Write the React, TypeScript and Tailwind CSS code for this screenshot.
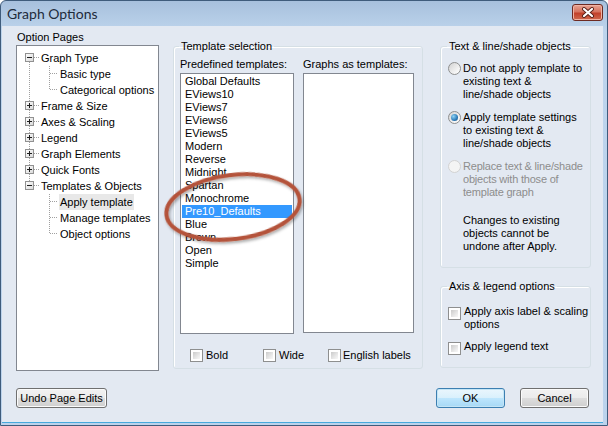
import React from 'react';

const TREE = [
  { label: 'Graph Type', level: 0, exp: 'minus', first: true },
  { label: 'Basic type', level: 1, parentOpen: true },
  { label: 'Categorical options', level: 1, parentOpen: true, lastChild: true },
  { label: 'Frame & Size', level: 0, exp: 'plus' },
  { label: 'Axes & Scaling', level: 0, exp: 'plus' },
  { label: 'Legend', level: 0, exp: 'plus' },
  { label: 'Graph Elements', level: 0, exp: 'plus' },
  { label: 'Quick Fonts', level: 0, exp: 'plus' },
  { label: 'Templates & Objects', level: 0, exp: 'minus', last: true },
  { label: 'Apply template', level: 1, selected: true },
  { label: 'Manage templates', level: 1 },
  { label: 'Object options', level: 1, lastChild: true },
];

const TEMPLATES = [
  'Global Defaults', 'EViews10', 'EViews7', 'EViews6', 'EViews5', 'Modern', 'Reverse',
  'Midnight', 'Spartan', 'Monochrome', 'Pre10_Defaults', 'Blue', 'Brown', 'Open', 'Simple',
];

const dot = { stroke: '#a0a0a0', strokeWidth: 1, strokeDasharray: '1 1', shapeRendering: 'crispEdges' as const };

function Gutter({ row }: { row: (typeof TREE)[number] }) {
  if (row.level === 0) {
    return (
      <svg width="18" height="16" className="shrink-0">
        {!row.first && <line x1="7.5" y1="0" x2="7.5" y2="3" {...dot} />}
        {!row.last && <line x1="7.5" y1="12" x2="7.5" y2="16" {...dot} />}
        <line x1="12" y1="7.5" x2="17" y2="7.5" {...dot} />
        <defs>
          <linearGradient id="bx" x1="0" y1="0" x2="1" y2="1">
            <stop offset="0" stopColor="#ffffff" />
            <stop offset="1" stopColor="#d8d8d8" />
          </linearGradient>
        </defs>
        <rect x="3.5" y="3.5" width="8" height="8" fill="url(#bx)" stroke="#919191" shapeRendering="crispEdges" />
        <line x1="5" y1="7.5" x2="10" y2="7.5" stroke="#1e1e1e" shapeRendering="crispEdges" />
        {row.exp === 'plus' && <line x1="7.5" y1="5" x2="7.5" y2="10" stroke="#1e1e1e" shapeRendering="crispEdges" />}
      </svg>
    );
  }
  return (
    <svg width="37" height="16" className="shrink-0">
      {row.parentOpen && <line x1="7.5" y1="0" x2="7.5" y2="16" {...dot} />}
      <line x1="27.5" y1="0" x2="27.5" y2={row.lastChild ? 8 : 16} {...dot} />
      <line x1="28" y1="7.5" x2="35" y2="7.5" {...dot} />
    </svg>
  );
}

function Radio({ on, disabled }: { on?: boolean; disabled?: boolean }) {
  return (
    <span
      className={`h-[13px] w-[13px] shrink-0 rounded-full border flex items-center justify-center ${
        disabled
          ? 'border-[#d2d2d2] bg-[#f4f4f4]'
          : 'border-[#8e8f8f] bg-[linear-gradient(135deg,#d2d2d2,#f4f4f4_70%,#ffffff)]'
      }`}
    >
      {on && <span className="h-[7px] w-[7px] rounded-full bg-[radial-gradient(circle_at_35%_35%,#8fd3f5,#2c7bb8_60%,#1b4f80)]" />}
    </span>
  );
}

function Check() {
  return (
    <span className="h-[13px] w-[13px] shrink-0 border border-[#8e8f8f] bg-white p-[2px] flex">
      <span className="flex-1 bg-[linear-gradient(135deg,#cbcbcb,#ececec_70%,#f8f8f8)]" />
    </span>
  );
}

const btn =
  'h-[20px] rounded-[3px] border border-[#707070] bg-[linear-gradient(#f2f2f2_0%,#ebebeb_50%,#dddddd_51%,#cfcfcf_100%)] shadow-[inset_0_0_0_1px_#fbfbfb] text-[11px] text-black flex items-center justify-center';

const group = 'border border-[#d5dfe5] rounded-[3px] shadow-[inset_1px_1px_0_#ffffff]';

export default function App() {
  return (
    <div className="relative w-[608px] h-[426px] flex flex-col overflow-hidden border border-[#3f5c7c] rounded-t-[6px] bg-[linear-gradient(#a7c0dd,#bdd4ec_30px,#bcd3ec)] font-['Liberation_Sans',Arial,sans-serif] text-[11px] leading-[13px] text-black">
      {/* title bar */}
      <div className="h-[25px] shrink-0 flex items-center pl-[6px] pr-[4px]">
        <span className="font-['Lato',sans-serif] text-[14px] leading-[18px] text-[#1e2b3b]">Graph Options</span>
        <span className="ml-auto mt-[-3px] w-[31px] h-[17px] rounded-[3px] border border-[#6d2a22] bg-[linear-gradient(#e8a493,#d5735f_45%,#c2402a_55%,#cf6a4f)] shadow-[inset_0_0_0_1px_#f0b3a4] flex items-center justify-center">
          <svg width="14" height="11" viewBox="0 0 14 11">
            <path d="M3 2 L11 9 M11 2 L3 9" stroke="#5a2219" strokeWidth="4" strokeLinecap="round" />
            <path d="M3 2 L11 9 M11 2 L3 9" stroke="#ffffff" strokeWidth="2.2" strokeLinecap="round" />
          </svg>
        </span>
      </div>

      {/* client area */}
      <div className="flex-1 ml-[1px] mr-[4px] mb-[2px] bg-[#e3e9f2] border-b border-[#46a9dd] flex flex-col">
        <div className="flex items-start">
          {/* option pages */}
          <div className="ml-[14px] mt-[5px] w-[143px] flex flex-col">
            <div className="pl-[1px]">Option Pages</div>
            <div className="mt-[1px] h-[326px] bg-white border border-[#828790] pl-[5px] pt-[4px]">
              {TREE.map(r => (
                <div key={r.label} className="h-[16px] flex items-center">
                  <Gutter row={r} />
                  <span className={`px-[1px] leading-[16px] ${r.selected ? 'bg-[#e8e8e8]' : ''}`}>{r.label}</span>
                </div>
              ))}
            </div>
          </div>

          {/* template selection */}
          <fieldset className={`${group} ml-[14px] mt-[14px] w-[250px] h-[329px] px-[6px]`}>
            <legend className="ml-[-1px] px-[2px] leading-[13px]">Template selection</legend>
            <div className="pt-[5px] flex gap-[9px]">
              <div className="flex flex-col w-[114px]">
                <div>Predefined templates:</div>
                <div className="mt-[2px] h-[261px] border border-[#828790] bg-white p-[1px]">
                  {TEMPLATES.map(t => (
                    <div
                      key={t}
                      className={`h-[13px] pl-[3px] ${t === 'Pre10_Defaults' ? 'bg-[#3399ff] text-white' : ''}`}
                    >
                      {t}
                    </div>
                  ))}
                </div>
              </div>
              <div className="flex flex-col w-[111px]">
                <div>Graphs as templates:</div>
                <div className="mt-[2px] h-[260px] border border-[#828790] bg-white" />
              </div>
            </div>
            <div className="mt-[15px] ml-[10px] flex items-center">
              <div className="w-[73px] flex items-center gap-[3px]"><Check />Bold</div>
              <div className="w-[65px] flex items-center gap-[3px]"><Check />Wide</div>
              <div className="flex items-center gap-[2px]"><Check />English labels</div>
            </div>
          </fieldset>

          {/* right column */}
          <div className="ml-[17px] mt-[14px] w-[151px] flex flex-col whitespace-nowrap">
            <fieldset className={`${group} h-[228px] pl-[7px]`}>
              <legend className="ml-[-1px] px-[2px] leading-[13px]">Text &amp; line/shade objects</legend>
              <div className="pt-[9px] flex flex-col">
                <div className="flex gap-[2px]">
                  <Radio />
                  <span>Do not apply template to<br />existing text &amp;<br />line/shade objects</span>
                </div>
                <div className="mt-[10px] flex gap-[2px]">
                  <Radio on />
                  <span>Apply template settings<br />to existing text &amp;<br />line/shade objects</span>
                </div>
                <div className="mt-[10px] flex gap-[2px] text-[#8d8d8d]">
                  <Radio disabled />
                  <span className="tracking-[-0.2px]">Replace text &amp; line/shade<br />objects with those of<br />template graph</span>
                </div>
                <div className="mt-[15px] pl-[15px]">
                  Changes to existing<br />objects cannot be<br />undone after Apply.
                </div>
              </div>
            </fieldset>
            <fieldset className={`${group} mt-[12px] h-[88px] pl-[7px]`}>
              <legend className="ml-[-1px] px-[2px] leading-[13px]">Axis &amp; legend options</legend>
              <div className="pt-[12px] flex flex-col">
                <div className="flex gap-[3px]">
                  <span className="mt-[2px]"><Check /></span>
                  <span>Apply axis label &amp; scaling<br />options</span>
                </div>
                <div className="mt-[9px] flex gap-[3px]">
                  <span className="mt-[2px]"><Check /></span>
                  <span>Apply legend text</span>
                </div>
              </div>
            </fieldset>
          </div>
        </div>

        {/* buttons */}
        <div className="mt-[17px] flex items-center">
          <button className={`${btn} ml-[14px] w-[91px]`}>Undo Page Edits</button>
          <button className="ml-auto h-[20px] w-[69px] rounded-[3px] border border-[#3c7fb1] bg-[linear-gradient(#eaf6fd_0%,#d9f0fc_50%,#bee6fd_51%,#a7d9f5_100%)] shadow-[inset_0_0_0_1px_#c4e5f6] text-[11px] flex items-center justify-center">OK</button>
          <button className={`${btn} ml-[15px] mr-[14px] w-[69px]`}>Cancel</button>
        </div>
      </div>

      {/* annotation */}
      <svg className="absolute left-[150px] top-[160px]" width="170" height="100">
        <defs>
          <filter id="sh" x="-20%" y="-20%" width="140%" height="140%">
            <feDropShadow dx="1" dy="2" stdDeviation="1.5" floodColor="#000" floodOpacity="0.35" />
          </filter>
        </defs>
        <ellipse cx="82" cy="46" rx="67" ry="32" transform="rotate(-7 82 46)" fill="none" stroke="#b4533a" strokeWidth="4" filter="url(#sh)" />
      </svg>
    </div>
  );
}
